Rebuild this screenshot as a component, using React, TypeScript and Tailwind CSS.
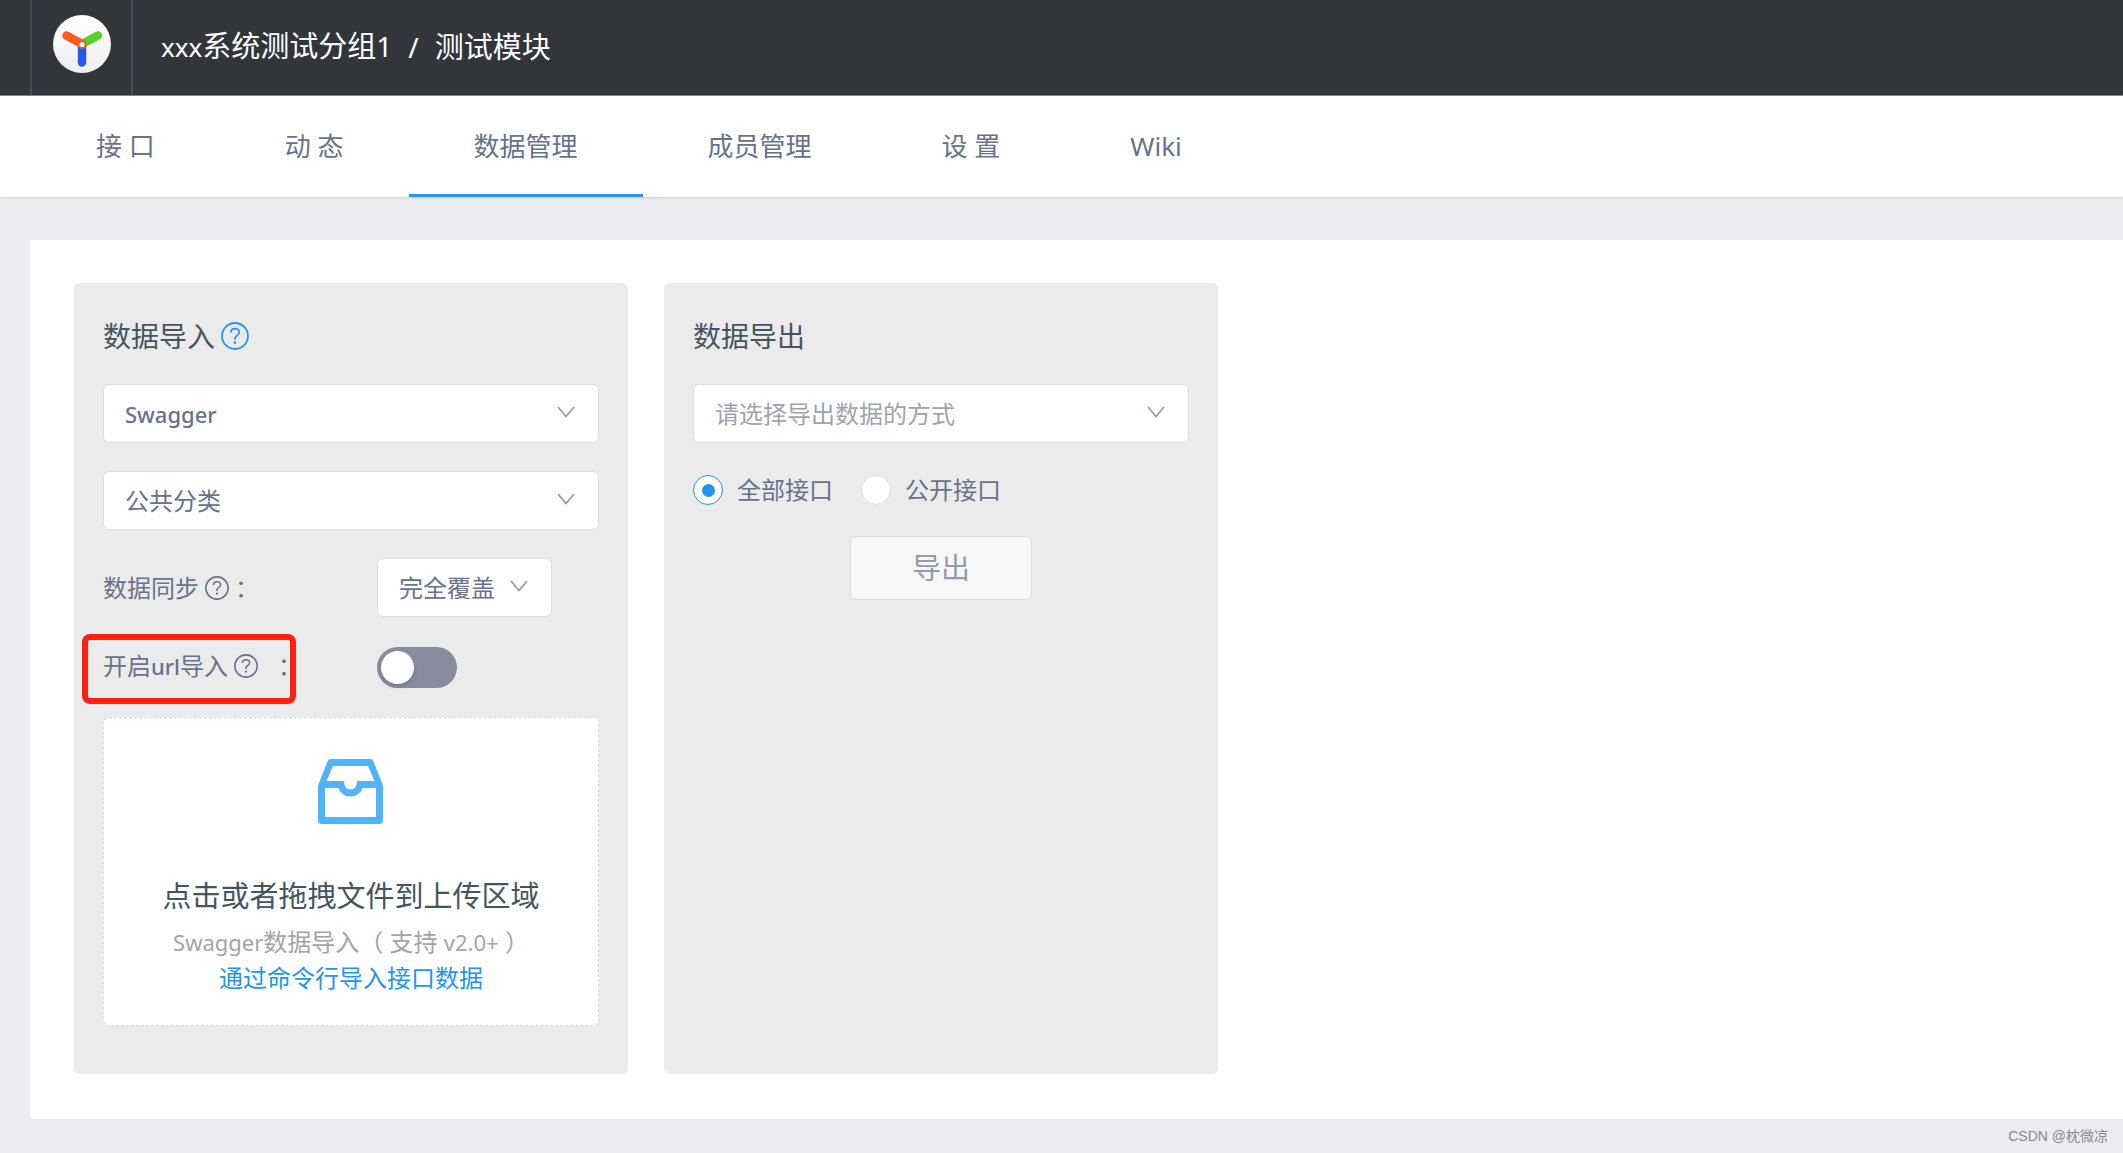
import { useState, type ReactNode } from "react";
import clsx from "clsx";

const tabs = ["接 口", "动 态", "数据管理", "成员管理", "设 置", "Wiki"];

function Logo() {
  return (
    <svg viewBox="0 0 58 58" className="size-[58px]" aria-hidden="true">
      <defs>
        <linearGradient id="logo-bg" x1="0" y1="0" x2="0" y2="1">
          <stop offset="0" stopColor="#ffffff" />
          <stop offset="1" stopColor="#eeeeee" />
        </linearGradient>
      </defs>
      <circle cx="29" cy="29" r="29" fill="url(#logo-bg)" />
      <g strokeWidth="8.400" strokeLinecap="round">
        <path d="M29 29L45 20.500" stroke="#57d128" />
        <path d="M29 29V47.500" stroke="#2459f5" />
        <path d="M29 29L13.500 20.500" stroke="#ff5a1f" />
      </g>
      <circle cx="29" cy="29.500" r="3.400" fill="#fff" stroke="#ff5a1f" strokeWidth="1.800" />
    </svg>
  );
}

function HelpIcon({ className }: { className?: string }) {
  return (
    <svg viewBox="0 0 28 28" fill="none" stroke="currentColor" strokeWidth="1.800" className={className} aria-hidden="true">
      <circle cx="14" cy="14" r="13" />
      <path d="M9.800 10.600C9.800 8.100 11.600 6.700 14 6.700C16.400 6.700 18.200 8.200 18.200 10.400C18.200 13.200 14 13.600 14 16.400V17.600" />
      <circle cx="14" cy="20.600" r="1.300" fill="currentColor" stroke="none" />
    </svg>
  );
}

function InboxIcon() {
  return (
    <svg viewBox="0 0 65 65" className="size-[65px] text-[#4fb4ff]" aria-hidden="true">
      <path
        fill="currentColor"
        fillRule="evenodd"
        d="M12.500 0H52.500Q54.500 0 55.200 2L64.300 24.500Q65 26 65 28V61Q65 65 61 65H4Q0 65 0 61V28Q0 26 .7 24.500L9.800 2Q10.500 0 12.500 0ZM15 7L8.500 22H26C26 27 28.500 30.500 32.500 30.500C36.500 30.500 39 27 39 22H56.500L50 7ZM7 29V58H58V29H44.500C42.500 34.500 38 37.500 32.500 37.500C27 37.500 22.500 34.500 20.500 29Z"
      />
    </svg>
  );
}

type SelectProps = { label: string; options: string[]; className?: string };

function Select({ label, options, className }: SelectProps) {
  return (
    <div className="relative">
      <select
        aria-label={label}
        className={clsx("block h-[59px] w-full appearance-none rounded-md border border-[#dedede] bg-white pr-12 pl-[21px] outline-none focus:border-[#2395f1]", className)}
      >
        {options.map((o) => <option key={o}>{o}</option>)}
      </select>
      <svg viewBox="0 0 18 12" fill="none" stroke="#8f96a8" strokeWidth="1.600" className="pointer-events-none absolute top-[22px] right-6 h-3 w-[18px]" aria-hidden="true">
        <path d="M1 1L9 10.500L17 1" />
      </svg>
    </div>
  );
}

function Card({ title, children }: { title: ReactNode; children: ReactNode }) {
  return (
    <section className="w-full max-w-[554px] rounded-md bg-[#ebebeb] px-[29px] pt-8 pb-12">
      <h2 className="mb-[27px] flex items-center gap-1.5 text-[28px] leading-[42px] text-[#455560]">{title}</h2>
      {children}
    </section>
  );
}

function ImportCard() {
  const [urlImport, setUrlImport] = useState(false);

  return (
    <Card
      title={
        <>
          数据导入
          <a href="#help" aria-label="help"><HelpIcon className="size-7 text-[#2395f1]" /></a>
        </>
      }
    >
      <div className="flex flex-col gap-7">
        <Select label="import type" options={["Swagger"]} className="text-[22px] font-medium" />
        <Select label="category" options={["公共分类"]} />
        <div className="flex items-center">
          <div className="flex w-[274px] items-center">
            数据同步<HelpIcon className="mx-1.5 size-6" />：
          </div>
          <div className="w-[175px]">
            <Select label="sync mode" options={["完全覆盖"]} />
          </div>
        </div>
      </div>

      <div className="mt-[30px] mb-[29px] flex items-center">
        <div className="relative w-[274px] pb-1">
          <label htmlFor="url-import" className="flex items-center">
            开启<span className="text-[22px] font-medium">url</span>导入
            <HelpIcon className="mr-5 ml-1.5 size-6" />：
          </label>
          <span className="pointer-events-none absolute -top-3.5 -left-[21px] h-[70px] w-[214px] rounded-lg border-6 border-[#ff1f10]" />
        </div>
        <div className="relative h-[41px] w-20">
          <input
            id="url-import"
            type="checkbox"
            role="switch"
            checked={urlImport}
            onChange={(e) => setUrlImport(e.target.checked)}
            className="peer block h-full w-full appearance-none rounded-full bg-[#888c9e] checked:bg-[#2395f1]"
          />
          <span className="pointer-events-none absolute top-1 left-1 size-[33px] rounded-full bg-white shadow-md peer-checked:left-[43px]" />
        </div>
      </div>

      <div className="flex flex-col items-center rounded-md border border-dashed border-[#d9d9d9] bg-white pt-[41px] pb-[29px] text-center">
        <label className="flex flex-col items-center">
          <InboxIcon />
          <span className="mt-[50px] text-[29px] leading-[44px] text-[#455560]">点击或者拖拽文件到上传区域</span>
          <input type="file" className="sr-only" />
        </label>
        <p className="mt-1.5 leading-9 text-[#a0a4b0]">
          <span className="text-[22px]">Swagger</span>数据导入（ 支持 <span className="text-[22px]">v2.0+</span> ）
        </p>
        <a href="#cli" className="leading-9 text-[#2395f1]">通过命令行导入接口数据</a>
      </div>
    </Card>
  );
}

function ExportCard() {
  const [scope, setScope] = useState("全部接口");

  return (
    <Card title="数据导出">
      <Select label="export type" options={["请选择导出数据的方式"]} className="text-[#9ea3b2]" />
      <div className="mt-[29px] flex gap-7">
        {["全部接口", "公开接口"].map((name) => (
          <label key={name} className="flex items-center gap-3.5">
            <input
              type="radio"
              name="scope"
              checked={scope === name}
              onChange={() => setScope(name)}
              className="grid size-[30px] appearance-none place-items-center rounded-full border border-[#dedede] bg-white before:size-[13px] before:rounded-full checked:border-[#2395f1] checked:before:bg-[#2395f1]"
            />
            {name}
          </label>
        ))}
      </div>
      <button disabled className="mx-auto mt-7 block h-16 w-[182px] rounded-md border border-[#dedede] bg-[#f7f7f7] text-[29px] text-[#949bad]">
        导出
      </button>
    </Card>
  );
}

export default function App() {
  return (
    <div className="flex min-h-screen flex-col bg-[#ecedf1] font-['Noto_Sans','Noto_Sans_CJK_SC',sans-serif] text-2xl leading-9 text-[#68728a]">
      <header className="flex h-24 border-b border-[#85878a] bg-[#32363a] pl-[30px]">
        <a href="#home" aria-label="home" className="flex w-[103px] justify-center border-x-2 border-[#434d57] pt-[15px]">
          <Logo />
        </a>
        <h1 className="flex items-center gap-4 pb-0.5 pl-7 text-[29px] whitespace-nowrap text-white">
          <span><span className="text-[26px]">xxx</span>系统测试分组<span className="text-[28px]">1</span></span>
          <span className="text-[28px]">/</span>
          <span>测试模块</span>
        </h1>
      </header>

      <nav className="flex h-[101px] bg-white pl-[31px] text-[26px] shadow-sm">
        {tabs.map((t) => (
          <a
            key={t}
            href="#tab"
            className={clsx("flex items-center border-b-3 px-[65px] pt-0.5 whitespace-nowrap", t === "数据管理" ? "border-[#2395f1]" : "border-transparent")}
          >
            {t}
          </a>
        ))}
      </nav>

      <main className="mt-[43px] ml-[30px] flex flex-wrap gap-9 bg-white px-11 pt-[43px] pb-[45px] lg:flex-nowrap">
        <ImportCard />
        <ExportCard />
      </main>

      <footer className="flex h-[34px] items-center justify-end pr-[15px] font-['Liberation_Sans','Noto_Sans_CJK_SC',sans-serif] text-sm text-[#8a8a8a]">
        CSDN @枕微凉
      </footer>
    </div>
  );
}
